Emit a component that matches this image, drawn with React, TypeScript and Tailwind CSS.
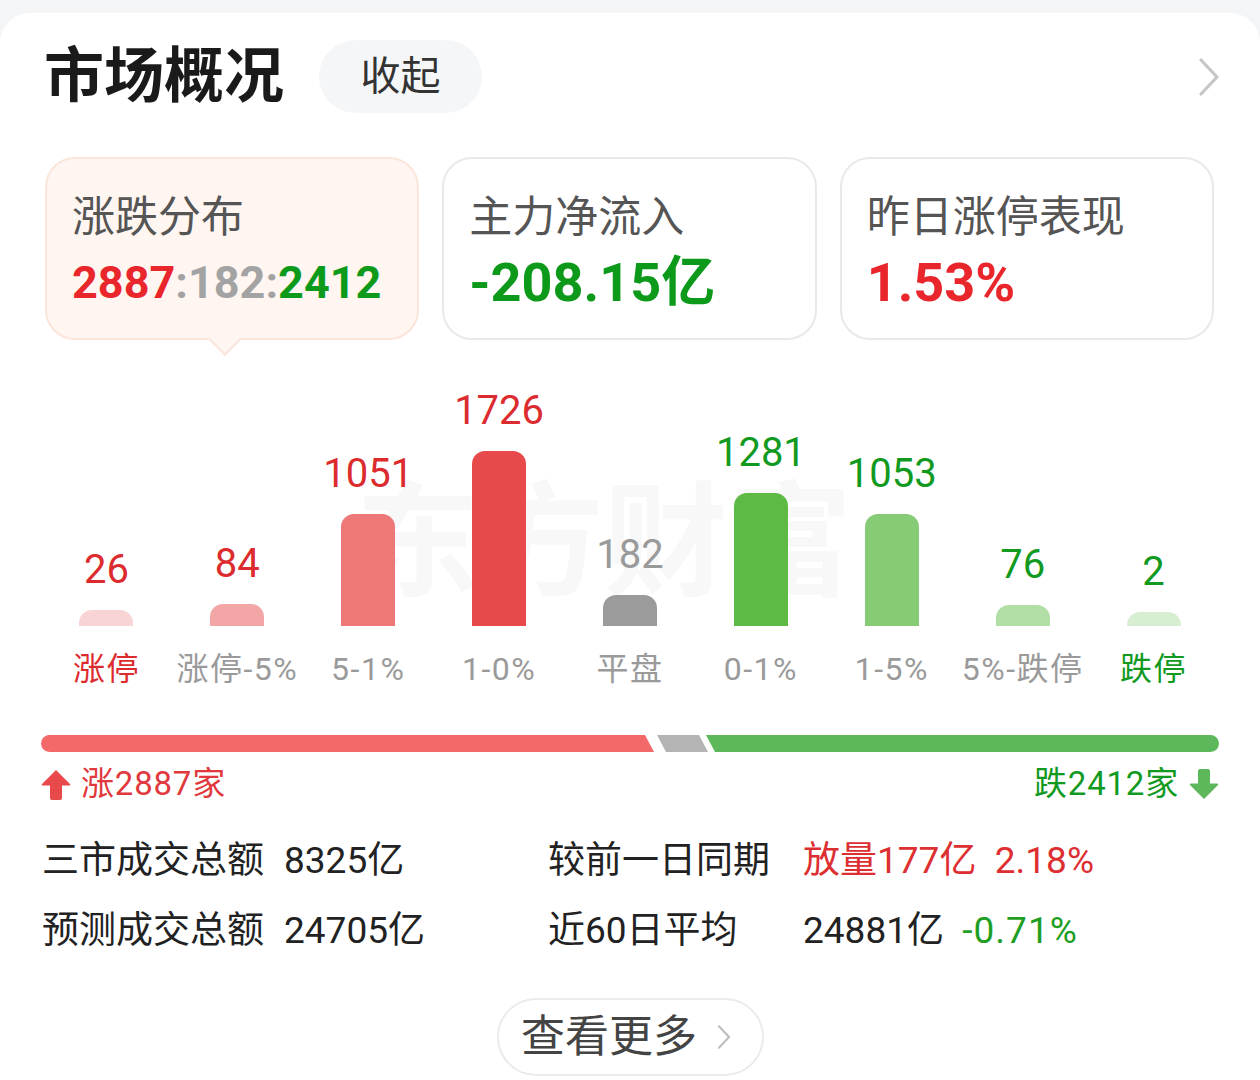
import React from 'react';

// bar chart data (涨跌分布)
const buckets = [
  { label: '涨停', value: 26, bar: 'bg-[#f9d4d4]', num: 'text-[#dc2b2e]', cat: 'text-[#dc2b2e]' },
  { label: '涨停-5%', value: 84, bar: 'bg-[#f2a6a6]', num: 'text-[#dc2b2e]', cat: 'text-[#9a9a9a]' },
  { label: '5-1%', value: 1051, bar: 'bg-[#ee7878]', num: 'text-[#dc2b2e]', cat: 'text-[#9a9a9a]' },
  { label: '1-0%', value: 1726, bar: 'bg-[#e8494a]', num: 'text-[#dc2b2e]', cat: 'text-[#9a9a9a]' },
  { label: '平盘', value: 182, bar: 'bg-[#9b9b9b]', num: 'text-[#9a9a9a]', cat: 'text-[#9a9a9a]' },
  { label: '0-1%', value: 1281, bar: 'bg-[#5cba45]', num: 'text-[#119a1f]', cat: 'text-[#9a9a9a]' },
  { label: '1-5%', value: 1053, bar: 'bg-[#86cb76]', num: 'text-[#119a1f]', cat: 'text-[#9a9a9a]' },
  { label: '5%-跌停', value: 76, bar: 'bg-[#b1dfa6]', num: 'text-[#119a1f]', cat: 'text-[#9a9a9a]' },
  { label: '跌停', value: 2, bar: 'bg-[#d7eed1]', num: 'text-[#119a1f]', cat: 'text-[#119a1f]' },
];

const MAX = 1726;

const ChevronRight = ({ className }: { className?: string }) => (
  <svg viewBox="0 0 22 40" className={className} fill="none">
    <polyline points="3,3 19,20 3,37" stroke="currentColor" strokeWidth="3.2" strokeLinecap="round" strokeLinejoin="round" />
  </svg>
);

const ArrowUp = () => (
  <svg viewBox="0 0 30 31" className="w-[30px] h-[31px]">
    <path d="M15 1 L29 15 Q30 16.5 28 16.5 H21 V29 Q21 31 19 31 H11 Q9 31 9 29 V16.5 H2 Q0 16.5 1 15 Z" fill="#e8494a" />
  </svg>
);

const ArrowDown = () => (
  <svg viewBox="0 0 30 31" className="w-[30px] h-[31px]">
    <path d="M15 30 L29 16 Q30 14.5 28 14.5 H21 V2 Q21 0 19 0 H11 Q9 0 9 2 V14.5 H2 Q0 14.5 1 16 Z" fill="#5cb85b" />
  </svg>
);

const SummaryCard = ({ title, children, active }: { title: string; children: React.ReactNode; active?: boolean }) => (
  <div
    className={
      active
        ? 'relative h-[183px] rounded-[30px] border-2 border-[#fbe4da] bg-[#fff5f1] px-[25px] pt-[32px]'
        : 'relative h-[183px] rounded-[30px] border-2 border-[#e9e9e9] bg-white px-[25px] pt-[32px]'
    }
  >
    <div className="text-[43px] leading-[52px] text-[#555]">{title}</div>
    <div className="mt-[10px] leading-[60px] font-bold">{children}</div>
    {active && (
      <div className="absolute left-[166px] bottom-[-13px] w-[24px] h-[24px] rotate-45 bg-[#fff5f1] border-r-2 border-b-2 border-[#fbe4da]" />
    )}
  </div>
);

export default function App() {
  return (
    <div className="min-h-[1080px] bg-[#f4f5f7] pt-[13px] [font-family:Roboto,'Noto_Sans_CJK_SC',sans-serif]">
      <div className="rounded-t-[30px] bg-white pb-[40px]">
        {/* header */}
        <div className="flex items-center pl-[44px] pr-[40px] pt-[27px]">
          <h1 className="text-[60px] font-bold leading-none text-[#1a1a1a]">市场概况</h1>
          <button className="ml-[35px] h-[73px] w-[163px] rounded-full bg-[#f5f6f8] text-[40px] text-[#333]">收起</button>
          <ChevronRight className="ml-auto w-[22px] h-[40px] text-[#c6c6c6]" />
        </div>

        {/* summary cards */}
        <div className="mt-[44px] grid grid-cols-3 gap-[23px] pl-[45px] pr-[46px]">
          <SummaryCard title="涨跌分布" active>
            <span className="text-[45px]">
              <span className="text-[#e8262c]">2887</span>
              <span className="text-[#a3a3a3]">:182:</span>
              <span className="text-[#0d9a1b]">2412</span>
            </span>
          </SummaryCard>
          <SummaryCard title="主力净流入">
            <span className="text-[54px] text-[#0d9a1b]">-208.15亿</span>
          </SummaryCard>
          <SummaryCard title="昨日涨停表现">
            <span className="text-[54px] text-[#e8262c]">1.53%</span>
          </SummaryCard>
        </div>

        {/* distribution chart */}
        <div className="relative mt-[30px] px-[41px]">
          <div className="absolute left-[356px] top-[112px] text-[124px] font-bold leading-none text-[#f8f8f8] select-none">
            东方财富
          </div>
          <div className="relative grid grid-cols-9">
            {buckets.map((b) => (
              <div key={b.label} className="flex flex-col items-center">
                <div className="flex h-[256px] flex-col items-center justify-end">
                  <div className={`text-[40px] leading-none mb-[20px] ${b.num}`}>{b.value}</div>
                  <div
                    className={`w-[54px] rounded-t-[13px] ${b.bar}`}
                    style={{ height: `${14 + (b.value / MAX) * 161}px` }}
                  />
                </div>
                <div className={`mt-[23px] text-[32px] leading-[40px] tracking-[1.5px] whitespace-nowrap ${b.cat}`}>
                  {b.label}
                </div>
              </div>
            ))}
          </div>
        </div>

        {/* up / flat / down bar */}
        <div className="mt-[46px] px-[41px]">
          <svg viewBox="0 0 1178 17" className="block w-[1178px] h-[17px]">
            <path d="M8.5 0 H604 L613 17 H8.5 A8.5 8.5 0 0 1 8.5 0 Z" fill="#f36868" />
            <path d="M616 0 H658 L667 17 H625 Z" fill="#b4b4b4" />
            <path d="M665 0 H1169.5 A8.5 8.5 0 0 1 1169.5 17 H674 Z" fill="#5cb85b" />
          </svg>
          <div className="mt-[12px] flex items-center justify-between">
            <div className="flex items-center gap-[10px] text-[33px] leading-[40px] tracking-[0.8px] text-[#e0383c]">
              <ArrowUp />
              <span>涨2887家</span>
            </div>
            <div className="flex items-center gap-[10px] text-[33px] leading-[40px] tracking-[0.8px] text-[#119a1f]">
              <span>跌2412家</span>
              <ArrowDown />
            </div>
          </div>
        </div>

        {/* turnover stats */}
        <div className="mt-[22px] pl-[42px] text-[37px] text-[#222]">
          <div className="grid h-[70px] grid-cols-[242px_264px_255px_auto] items-center">
            <span>三市成交总额</span>
            <span>8325亿</span>
            <span>较前一日同期</span>
            <span className="text-[#dd2f31]">放量177亿&nbsp;&nbsp;2.18%</span>
          </div>
          <div className="grid h-[70px] grid-cols-[242px_264px_255px_auto] items-center">
            <span>预测成交总额</span>
            <span>24705亿</span>
            <span>近60日平均</span>
            <span>
              24881亿&nbsp;&nbsp;<span className="text-[#1f9e24] tracking-[1px]">-0.71%</span>
            </span>
          </div>
        </div>

        {/* more */}
        <div className="mt-[32px] flex justify-center">
          <button className="flex h-[78px] w-[267px] items-center justify-center gap-[20px] rounded-full border-2 border-[#ebebeb] bg-white pr-[8px]">
            <span className="text-[44px] text-[#444]">查看更多</span>
            <ChevronRight className="w-[14px] h-[26px] text-[#bdbdbd]" />
          </button>
        </div>
      </div>
    </div>
  );
}
